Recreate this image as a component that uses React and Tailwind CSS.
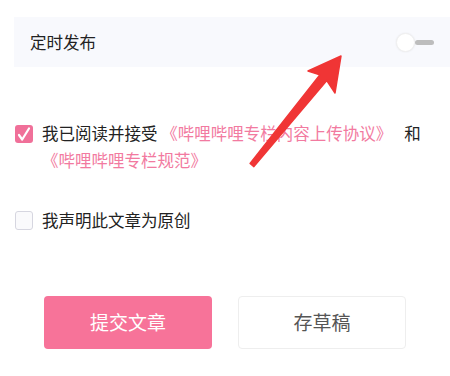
function Toggle() {
    return (
        <div className="flex items-center w-[39px] h-5">
            <div className="w-[19px] h-[19px] rounded-full bg-white border border-[#f0f0f0] shadow-[0_0_2px_rgba(0,0,0,0.08)] shrink-0" />
            <div className="h-[5px] w-[19px] rounded-full bg-[#bdbdbd]" />
        </div>
    )
}

function Arrow() {
    return (
        <svg className="absolute inset-0 pointer-events-none" width="450" height="376" viewBox="0 0 450 376">
            <polygon
                points="341,56 335,93 326.8,80.5 253.9,166.6 250.1,163.4 319.8,74.9 308,71"
                fill="#f03535"
                stroke="#f03535"
                strokeWidth="1.5"
                strokeLinejoin="round"
            />
        </svg>
    )
}

export default function App() {
    return (
        <div className="relative w-[450px] h-[376px] bg-white overflow-hidden text-[#222] font-['Noto_Sans_CJK_SC','Noto_Sans',sans-serif]">
            <div className="pt-[17px]">
                <div className="ml-[14px] h-[50px] bg-[#f8f9fd] flex items-center justify-between pl-[16px] pr-[15px]">
                    <span className="text-[16.5px]">定时发布</span>
                    <Toggle />
                </div>
            </div>

            <div className="flex items-start gap-[9px] pl-[15px] pr-[20px] mt-[53px]">
                <div className="w-[18px] h-[18px] mt-[4.5px] rounded-[3px] bg-[#f07099] flex items-center justify-center shrink-0">
                    <svg width="16" height="16" viewBox="0 0 16 16">
                        <path d="M3 9 L6.2 13.5 L13 2.5" fill="none" stroke="white" strokeWidth="2.2" strokeLinecap="round" strokeLinejoin="round" />
                    </svg>
                </div>
                <p className="text-[16.5px] leading-[27px]">
                    我已阅读并接受 <span className="text-[#f27aa0]">《哔哩哔哩专栏内容上传协议》</span><span className="ml-[12px] mr-[4px]">和</span> <span className="text-[#f27aa0]">《哔哩哔哩专栏规范》</span>
                </p>
            </div>

            <div className="flex items-start gap-[9px] pl-[15px] mt-[33px]">
                <div className="w-[18px] h-[19px] mt-[4px] rounded-[3px] border border-[#d6d6e0] bg-[#fafafc] shrink-0" />
                <p className="text-[16.5px] leading-[27px]">我声明此文章为原创</p>
            </div>

            <div className="flex gap-[26px] pl-[44px] mt-[62px]">
                <button className="w-[168px] h-[53px] rounded-[4px] bg-[#f77399] text-white text-[19px]">提交文章</button>
                <button className="w-[168px] h-[53px] rounded-[4px] bg-white border border-[#eeeeee] text-[#555] text-[19px]">存草稿</button>
            </div>

            <Arrow />
        </div>
    )
}
